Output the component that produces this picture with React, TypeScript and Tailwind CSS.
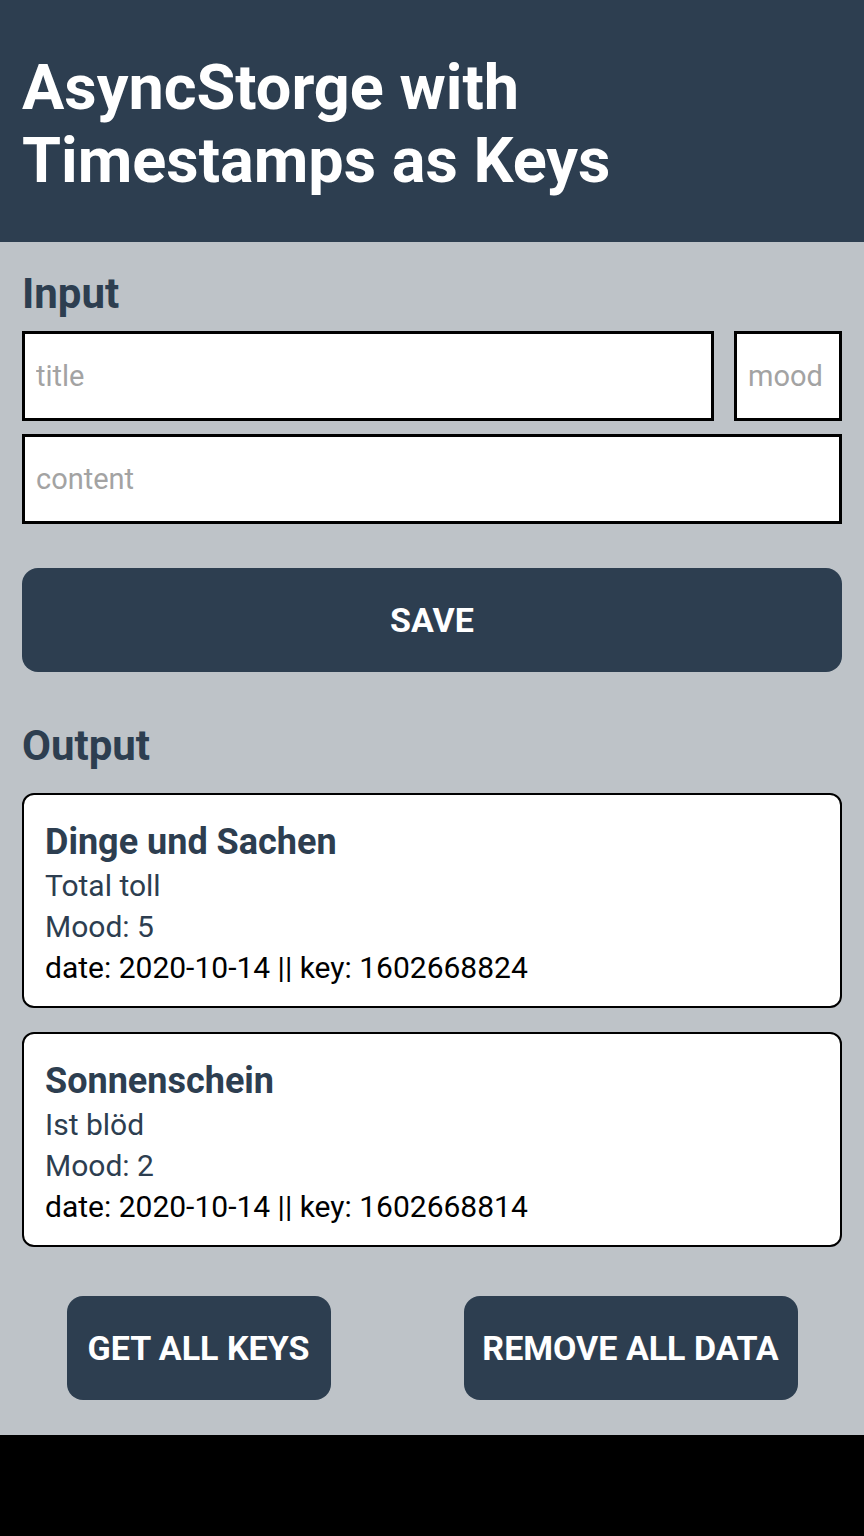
import React from "react";

const entries = [
  { title: "Dinge und Sachen", content: "Total toll", mood: 5, date: "2020-10-14", key: "1602668824" },
  { title: "Sonnenschein", content: "Ist blöd", mood: 2, date: "2020-10-14", key: "1602668814" },
];

export default function App() {
  return (
    <div className="flex h-[1536px] w-[864px] flex-col bg-black font-['Roboto',sans-serif]">
      {/* Header */}
      <header className="flex h-[242px] shrink-0 items-center bg-[#2d3e50] px-[22px] pt-[6px]">
        <h1 className="text-[63px] leading-[73px] font-bold text-white">
          AsyncStorge with
          <br />
          Timestamps as Keys
        </h1>
      </header>

      {/* Body */}
      <main className="flex h-[1193px] shrink-0 flex-col bg-[#bec3c8] px-[22px]">
        <h2 className="mt-[26px] text-[42px] leading-[52px] font-bold text-[#2d3e50]">Input</h2>

        <div className="mt-[11px] flex gap-[20px]">
          <input
            placeholder="title"
            className="h-[90px] flex-1 border-[3px] border-black bg-white px-[11px] text-[29px] text-black outline-none placeholder:text-[#a3a3a3]"
          />
          <input
            placeholder="mood"
            className="h-[90px] w-[108px] border-[3px] border-black bg-white px-[11px] text-[29px] text-black outline-none placeholder:text-[#a3a3a3]"
          />
        </div>
        <input
          placeholder="content"
          className="mt-[13px] h-[90px] w-full border-[3px] border-black bg-white px-[11px] text-[29px] text-black outline-none placeholder:text-[#a3a3a3]"
        />

        <button className="mt-[44px] h-[104px] w-full rounded-[16px] bg-[#2d3e50] text-[34px] font-bold text-white uppercase">
          Save
        </button>

        <h2 className="mt-[48px] text-[42px] leading-[52px] font-bold text-[#2d3e50]">Output</h2>

        <div className="mt-[21px] flex flex-col gap-[24px]">
          {entries.map((e) => (
            <div key={e.key} className="h-[215px] rounded-[12px] border-2 border-black bg-white px-[21px] pt-[24px]">
              <div className="text-[36px] leading-[46px] font-bold text-[#2d3e50]">{e.title}</div>
              <div className="text-[30px] leading-[41px] text-[#2d3e50]">{e.content}</div>
              <div className="text-[30px] leading-[41px] text-[#2d3e50]">Mood: {e.mood}</div>
              <div className="text-[30px] leading-[41px] text-black">
                date: {e.date} || key: {e.key}
              </div>
            </div>
          ))}
        </div>

        <div className="-mx-[22px] mt-[49px] flex justify-around">
          <button className="h-[104px] w-[264px] rounded-[16px] bg-[#2d3e50] text-[34px] font-bold text-white uppercase">
            Get all keys
          </button>
          <button className="h-[104px] w-[334px] rounded-[16px] bg-[#2d3e50] text-[34px] font-bold text-white uppercase">
            Remove all data
          </button>
        </div>
      </main>
    </div>
  );
}
